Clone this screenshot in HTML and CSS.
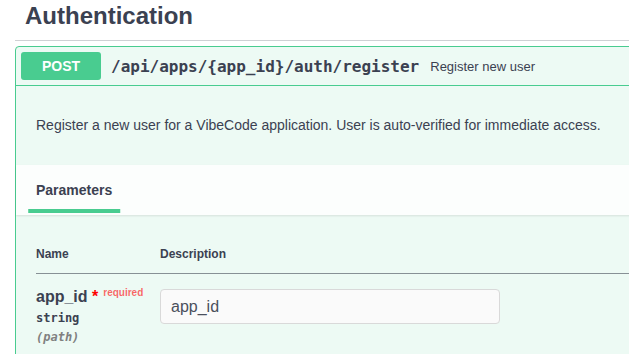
FILE: index.html
```html
<!DOCTYPE html>
<html>
<head>
<meta charset="utf-8">
<link rel="stylesheet" href="styles.css">
</head>
<body>
<div class="tag-section">
  <h3 class="tag">Authentication</h3>
  <div class="opblock">
    <div class="summary">
      <span class="method">POST</span>
      <span class="path">/api/apps/{app_id}/auth/register</span>
      <span class="summary-desc">Register new user</span>
    </div>
    <div class="desc-wrapper">
      <p>Register a new user for a VibeCode application. User is auto-verified for immediate access.</p>
    </div>
    <div class="section-header">
      <h4 class="tab"><span class="tab-label">Parameters</span></h4>
    </div>
    <div class="table-wrapper">
      <table class="params">
        <thead>
          <tr><th class="col-name">Name</th><th>Description</th></tr>
        </thead>
        <tbody>
          <tr>
            <td class="col-name">
              <div class="param-name">app_id<span class="star">&nbsp;*</span><span class="req">required</span></div>
              <div class="param-type">string</div>
              <div class="param-in">(path)</div>
            </td>
            <td class="col-desc">
              <input class="param-input" type="text" placeholder="app_id">
            </td>
          </tr>
        </tbody>
      </table>
    </div>
  </div>
</div>
</body>
</html>
```

FILE: styles.css
```css
html, body {
  margin: 0;
  padding: 0;
  background: #fff;
  overflow: hidden;
}
body {
  font-family: "Liberation Sans", Arial, sans-serif;
  color: #3b4151;
}
.tag-section {
  margin-left: 15px;
  width: 760px;
}
.tag {
  margin: 0 0 5px;
  padding: 1px 0 10px 10px;
  font-size: 24px;
  font-weight: bold;
  line-height: 29px;
  color: #3b4151;
  border-bottom: 1px solid #cfd1d4;
}
.opblock {
  border: 1px solid #49cc90;
  border-radius: 4px;
  background: #edfaf4;
}
.summary {
  display: flex;
  align-items: center;
  padding: 5px;
  border-bottom: 1px solid #49cc90;
}
.method {
  display: inline-block;
  min-width: 80px;
  padding: 6px 0;
  font-size: 14px;
  line-height: 16px;
  font-weight: bold;
  text-align: center;
  color: #fff;
  background: #49cc90;
  border-radius: 3px;
}
.path {
  padding: 0 10px;
  font-family: "DejaVu Sans Mono", monospace;
  font-size: 16px;
  font-weight: bold;
  color: #3b4151;
}
.summary-desc {
  padding-left: 1px;
  font-size: 13px;
  color: #3b4151;
}
.desc-wrapper {
  padding: 15px 20px 16px;
}
.desc-wrapper p {
  margin: 14px 0;
  font-size: 14px;
  line-height: 20px;
  color: #3b4151;
}
.section-header {
  display: flex;
  align-items: center;
  min-height: 50px;
  box-sizing: border-box;
  padding: 8px 20px;
  background: rgba(255, 255, 255, 0.8);
  box-shadow: 0 1px 2px rgba(0, 0, 0, 0.1);
}
.tab {
  margin: 0;
  font-size: 14px;
  line-height: 16px;
  font-weight: bold;
  color: #3b4151;
}
.tab-label {
  position: relative;
}
.tab-label::after {
  content: "";
  position: absolute;
  left: 50%;
  bottom: -15px;
  width: 120%;
  height: 4px;
  background: #49cc90;
  transform: translateX(-50%);
}
.table-wrapper {
  padding: 20px;
}
.params {
  width: 100%;
  border-collapse: collapse;
}
.params th {
  padding: 12px 0;
  font-size: 12px;
  line-height: 14px;
  font-weight: bold;
  text-align: left;
  color: #3b4151;
  border-bottom: 1px solid rgba(59, 65, 81, 0.35);
}
.params td {
  padding: 10px 0;
  vertical-align: top;
}
.col-name {
  width: 124px;
}
.param-name {
  font-size: 16px;
  line-height: 18px;
  font-weight: bold;
  color: #3b4151;
  white-space: nowrap;
}
.star {
  color: red;
}
.req {
  padding-left: 5px;
  font-size: 10px;
  color: rgba(255, 0, 0, 0.6);
  vertical-align: 6px;
}
.param-type {
  padding: 5px 0;
  font-family: "DejaVu Sans Mono", monospace;
  font-size: 12px;
  line-height: 14px;
  font-weight: bold;
  color: #3b4151;
}
.param-in {
  font-family: "DejaVu Sans Mono", monospace;
  font-size: 12px;
  line-height: 14px;
  font-style: italic;
  font-weight: bold;
  color: #808080;
}
.param-input {
  display: block;
  margin: 5px 0;
  width: 340px;
  height: 35px;
  box-sizing: border-box;
  padding: 8px 10px;
  font-family: "Liberation Sans", Arial, sans-serif;
  font-size: 16px;
  color: #3b4151;
  background: #fafafa;
  border: 1px solid #d9d9d9;
  border-radius: 4px;
  outline: none;
}
.param-input::placeholder {
  color: #4a4f5c;
  opacity: 1;
}
```
